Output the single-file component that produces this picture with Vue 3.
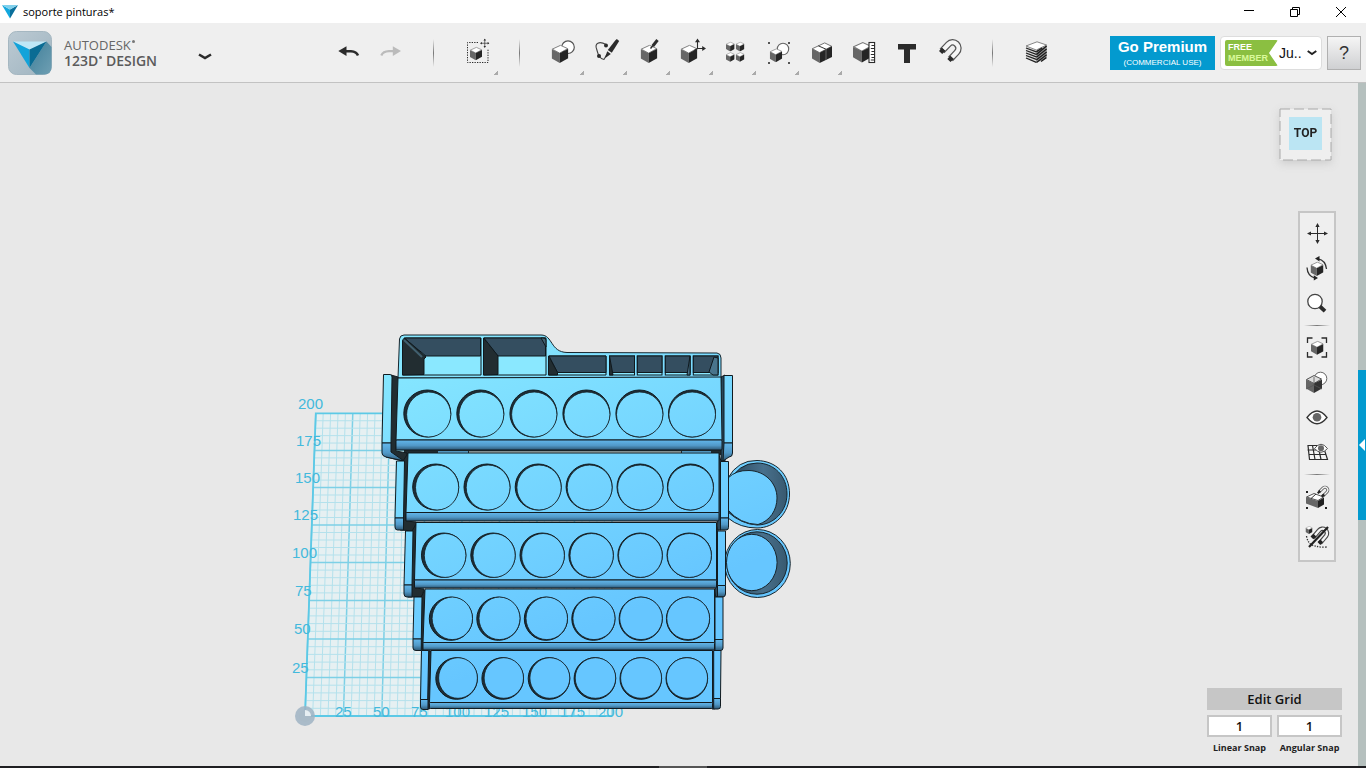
<script setup>
import { ref } from 'vue'

const linear = ref('1')
const angular = ref('1')

const tiers = [
  { cy: 413.5, r: 23.5, xs: [427.3, 480.3, 533.4, 586.4, 639.4, 692], up: 2,
    face: '398,378 721,377 722,440 396,440', fx: 396, fw: 326, by: 440, bh: 10,
    gapL: '391,375 398,377 396,451 407,453 407,462 386,457', gapR: '721,377 725,375 725,461 721,461',
    left: 'M383.5 374.5H390Q392 374.5 392 377L391 443H382Z', leftB: 'M382 443H391V452L404 461L386 457Q382 456 382 453Z',
    right: 'M724 375.5H732.5V443H724Z', rightB: 'M724 443H732.5V453Q732.5 457 729 457L723 461Z' },
  { cy: 487, r: 23, xs: [435.7, 487, 538.2, 589.1, 640, 690.4], up: 1,
    face: '408,453 719,453 719,512.5 406,512.5', fx: 406, fw: 313, by: 512.5, bh: 8.5,
    gapL: '403,461 408,453 406,521 416,522 415,531 400,530', gapR: '719,455 721,461 721,530 717,530',
    left: 'M396.5 461H404.5L403.5 518H395Z', leftB: 'M395 518H403.5V530H397.5Q395 530 395 527Z',
    right: 'M720.5 461.5H728.5V518H720.5Z', rightB: 'M720.5 518H728.5V527.5Q728.5 530 726 530H720.5Z' },
  { cy: 555.2, r: 22.2, xs: [443.7, 493, 542.2, 591.1, 640.1, 689.2], up: 0.5,
    face: '416,522.5 716.5,522.5 716.5,580 414.5,580', fx: 414.5, fw: 302, by: 580, bh: 8,
    gapL: '412,531 416,524 415,588 424,589 422,597 408,597', gapR: '716,524 718,531 718,597 715,597',
    left: 'M405.5 531H413L412 585H404Z', leftB: 'M404 585H412V597H407Q404 597 404 594Z',
    right: 'M717.5 531H725.5V585.5H717.5Z', rightB: 'M717.5 585.5H725.5V594Q725.5 597 722.5 597H717.5Z' },
  { cy: 618.7, r: 21.6, xs: [450.9, 498.4, 545.9, 593.4, 640.7, 688], up: -0.7,
    face: '425,589 714.5,589 714.5,642.5 423,642.5', fx: 423, fw: 291.5, by: 642.5, bh: 7.5,
    gapL: '421,597 425,590 423,650 430,651 430,652 418,650', gapR: '714,590 716,597 716,650 714,650',
    left: 'M414 597H422L421.3 639H413Z', leftB: 'M413 639H421.3V650.5H416Q413 650.5 413 648Z',
    right: 'M715 597H723V639.5H715Z', rightB: 'M715 639.5H723V648Q723 650.5 720.5 650.5H715Z' },
  { cy: 678.5, r: 20.8, xs: [456.6, 502.7, 549, 594.9, 640.8, 686.8], up: -1,
    face: '431,650.5 712.5,650.5 712.5,702.5 429.5,702.5', fx: 429.5, fw: 283, by: 702.5, bh: 6,
    gapL: '428,651 431,651 429.5,709 427,709', gapR: '712,651 714.5,651 714.5,709 712,709',
    left: 'M421.5 650.5H428.7L427.7 699.5H420.5Z', leftB: 'M420.5 699.5H428V709.5H423Q420.5 709.5 420.5 707Z',
    right: 'M713.7 650.5H721L720.5 698.5H713.7Z', rightB: 'M713.7 698.5H720.5V706.5Q720.5 709 718 709H713.7Z' }
]
const depth = [2.8, 2.2, 1.7, 1.1, 0.6, 0.4]

const rowY = [716, 677.5, 639, 600.5, 562.5, 525, 487.5, 450.5, 413.3]
const leftAt = y => 305 + (716 - y) * 0.0355
const rightAt = y => 611 + (716 - y) * 0.002
const rows = []
for (let i = 0; i < 8; i++) {
  for (let k = 0; k < 5; k++) {
    const y = rowY[i] + ((rowY[i + 1] - rowY[i]) * k) / 5
    rows.push({ y, x1: leftAt(y), x2: rightAt(y), major: k === 0 })
  }
}
const cols = []
for (let i = 0; i <= 40; i++) {
  cols.push({ x1: 305 + i * 7.68, x2: 315.8 + i * 7.4, major: i % 5 === 0 })
}
const yLabels = [
  ['200', 298, 409], ['175', 296, 446], ['150', 295, 483], ['125', 293, 520],
  ['100', 292, 558], ['75', 295, 596], ['50', 294, 634], ['25', 292, 673]
]
const xLabels = [
  ['25', 335], ['50', 373], ['75', 411], ['100', 445], ['125', 484], ['150', 522], ['175', 560], ['200', 598]
]
const pockets = [[609.5, 634.5, 'l'], [637.3, 662, 'n'], [665.3, 690, 'r'], [693.3, 718, 'w']]
</script>

<template>
  <div class="app">
    <svg class="defs" aria-hidden="true">
      <symbol id="cube" viewBox="0 0 16 18">
        <path d="M0.5 4.5L8.5 0.8L15.5 4L7.6 8.4Z" fill="#fff" stroke="#777" stroke-width=".9" />
        <path d="M0 4.6L7.7 8.4V18L0 13.6Z" fill="#666" />
        <path d="M7.7 8.4L16 4.2V13.4L7.7 18Z" fill="#252525" />
      </symbol>
      <symbol id="cross" viewBox="0 0 20 20">
        <path d="M10 2V18M2 10H18" stroke="#2b2b2b" stroke-width="1.4" />
        <path d="M10 0L12.6 4H7.4ZM10 20L12.6 16H7.4ZM0 10L4 7.4V12.6ZM20 10L16 7.4V12.6Z" fill="#2b2b2b" />
      </symbol>
    </svg>

    <header class="titlebar">
      <svg class="title-mark" viewBox="0 0 16 14"><path d="M0 0L8 4.5V13.5Z" fill="#12a7de" /><path d="M16 0L8 4.5V13.5Z" fill="#0a6f9b" /><path d="M0 0H16L8 4.5Z" fill="#7fd0ec" /></svg>
      <span class="title-text">soporte pinturas*</span>
      <div class="win">
        <button aria-label="Minimize"><svg viewBox="0 0 10 10"><path d="M0 3.5H10" /></svg></button>
        <button aria-label="Restore"><svg viewBox="0 0 10 10"><path d="M.5 2.5H7.5V9.5H.5ZM2.5 2.5V.5H9.5V7.5H7.5" /></svg></button>
        <button aria-label="Close"><svg viewBox="0 0 10 10"><path d="M0 0L10 10M10 0L0 10" /></svg></button>
      </div>
    </header>

    <div class="toolbar">
      <button class="brand" aria-label="Application menu">
        <svg class="logo" viewBox="0 0 44 44">
          <defs>
            <linearGradient id="lg" x1="0" y1="0" x2="1" y2="1"><stop offset="0" stop-color="#bccad3" /><stop offset="1" stop-color="#9fb4c0" /></linearGradient>
            <linearGradient id="ls" x1="0" y1="0" x2="1" y2="1"><stop offset="0" stop-color="#3f7f99" /><stop offset="1" stop-color="#6f9fb3" /></linearGradient>
          </defs>
          <rect x=".5" y=".5" width="43" height="43" rx="8" fill="url(#lg)" stroke="#a5b7c1" />
          <path d="M38.5 10.5L43.5 16V36Q43.5 43.5 36 43.5H28L21.5 37Z" fill="url(#ls)" />
          <path d="M5 10.5H38.5L21.5 19Z" fill="#bfe7f6" />
          <path d="M5 10.5L21.5 18.5V37Z" fill="#12a3da" />
          <path d="M38.5 10.5L21.5 18.5V37Z" fill="#0a6c94" />
        </svg>
        <span class="brand-text"><span class="b1">AUTODESK<i></i></span><span class="b2">123D<i></i> DESIGN</span></span>
        <svg class="chev" viewBox="0 0 14 7"><path d="M1 1.5L7 5L13 1.5" fill="none" stroke="#2b2b2b" stroke-width="2.6" /></svg>
      </button>

      <nav class="tools" aria-label="Tools">
        <button aria-label="Undo"><svg viewBox="0 0 43 58"><path d="M11.3 27L19.5 22.3V32Z" fill="#2b2b2b" /><path d="M18 27.2H24Q29.5 27.4 31 31.5" fill="none" stroke="#2b2b2b" stroke-width="2.5" /></svg></button>
        <button aria-label="Redo"><svg viewBox="0 0 43 58"><path d="M31 27L22.8 22.3V32Z" fill="#bbb" /><path d="M24 27.2H19Q13 27.4 11.3 31.5" fill="none" stroke="#bbb" stroke-width="2.3" /></svg></button>
        <span class="vsep"></span>
        <button class="more" aria-label="Transform"><svg viewBox="0 0 43 58">
          <path d="M22 18.5H11.5V38.5H32V25" fill="none" stroke="#2b2b2b" stroke-dasharray="1.3 1.2" />
          <use href="#cube" x="14" y="22.5" width="12" height="14" /><use href="#cross" x="24" y="14.5" width="9.5" height="9.5" /></svg></button>
        <span class="vsep"></span>
        <button class="more" aria-label="Primitives"><svg viewBox="0 0 43 58">
          <circle cx="26" cy="23.2" r="6.3" fill="#fff" stroke="#555" stroke-width="1.2" /><use href="#cube" x="9.5" y="20.5" width="17" height="18.5" /></svg></button>
        <button class="more" aria-label="Sketch"><svg viewBox="0 0 43 58">
          <path d="M21 20.5C14 16.5 9.5 19.5 11.6 25C12.4 28 13 30 14 32Q16 35 19 35.5L22 30" fill="none" stroke="#444" stroke-width="1.1" />
          <circle cx="21" cy="21.5" r="2" fill="#2b2b2b" /><circle cx="14" cy="32" r="2" fill="#2b2b2b" />
          <path d="M30.2 16.4L31.8 15L34.2 17L26.8 28.8L22.8 26Z" fill="#2b2b2b" /><path d="M22.2 27.2L25.8 29.9L20 34.3Z" fill="#2b2b2b" /></svg></button>
        <button class="more" aria-label="Construct"><svg viewBox="0 0 43 58">
          <use href="#cube" x="12.5" y="20.5" width="17" height="18.5" /><path d="M29.5 16L24.8 22" stroke="#2b2b2b" stroke-width="3" /><path d="M25 21.5L22.5 24.5" stroke="#2b2b2b" stroke-width="1.4" /></svg></button>
        <button class="more" aria-label="Modify"><svg viewBox="0 0 43 58">
          <use href="#cube" x="9.5" y="20.5" width="17" height="18.5" /><path d="M26.5 17V24.5H33M23 26.8L26.5 24.5" fill="none" stroke="#2b2b2b" stroke-width="1.1" />
          <path d="M26.5 14.5L29 18.2H24ZM35 24.5L31.2 22V27Z" fill="#2b2b2b" /></svg></button>
        <button class="more" aria-label="Pattern"><svg viewBox="0 0 43 58">
          <use href="#cube" x="12" y="17.6" width="8.6" height="10" /><use href="#cube" x="21.8" y="17.6" width="8.6" height="10" />
          <use href="#cube" x="12" y="28" width="8.6" height="10" /><use href="#cube" x="21.8" y="28" width="8.6" height="10" /></svg></button>
        <button class="more" aria-label="Grouping"><svg viewBox="0 0 43 58">
          <circle cx="26" cy="25" r="5.7" fill="#fff" stroke="#666" stroke-width="1.1" /><use href="#cube" x="12.8" y="24.2" width="12.4" height="14" />
          <path d="M11 18h2v2h-2ZM31 18h2v2h-2ZM11 38h2v2h-2ZM31 38h2v2h-2Z" fill="#555" /></svg></button>
        <button class="more" aria-label="Combine"><svg viewBox="0 0 43 58">
          <path d="M12.3 24.7L24.7 18.9L31.7 22.3L19.5 28.7Z" fill="#fff" stroke="#666" stroke-width=".9" /><path d="M12 24.8L19.7 28.7V39L12 34.5Z" fill="#666" />
          <path d="M19.7 28.7L32 22.3V33L19.7 39Z" fill="#252525" /><path d="M18.3 21.8L26 25.2" stroke="#333" stroke-width="1" /><path d="M26 25.2V36" stroke="#666" stroke-width="1" /></svg></button>
        <button aria-label="Measure"><svg viewBox="0 0 43 58">
          <use href="#cube" x="10" y="17" width="18.5" height="22" /><rect x="26" y="18.5" width="5.6" height="20" fill="#fff" stroke="#2b2b2b" stroke-width="1.1" />
          <path d="M28.5 21.5H32M27.8 24.5H32M28.5 27.5H32M27.8 30.5H32M28.5 33.5H32M27.8 36H32" stroke="#2b2b2b" stroke-width="1" /></svg></button>
        <button aria-label="Text"><svg viewBox="0 0 43 58"><path d="M12 20H30V25.5H24V39H18V25.5H12Z" fill="#2b2b2b" /></svg></button>
        <button aria-label="Snap"><svg viewBox="0 0 43 58">
          <path d="M13 27L19.4 20.2A5.7 5.7 0 0 1 27.8 28.2L21.5 35" fill="none" stroke="#555" stroke-width="6.6" />
          <path d="M14.5 25.4L19.4 20.2A5.7 5.7 0 0 1 27.8 28.2L23 33.4" fill="none" stroke="#f5f5f5" stroke-width="4.2" />
          <path d="M10 27L13 23.7L16.4 26.8L13.2 30ZM18.3 35L21.3 31.8L24.7 35L21.5 38Z" fill="#2b2b2b" /></svg></button>
        <span class="vsep"></span>
        <button aria-label="Material"><svg viewBox="0 0 43 58">
          <path d="M11 22.5L21.3 26.5V38.7L11 34Z" fill="#ddd" /><path d="M21.3 26.5L31.8 21.5V34L21.3 38.7Z" fill="#999" />
          <path d="M11 22L22 17.8L31.6 21L21.3 26Z" fill="#fff" stroke="#777" stroke-width=".9" />
          <path d="M11 24L21.3 27.8M11 26.5L21.3 30.3M11 29L21.3 32.8M11 31.5L21.3 35.3M11 34L21.3 38.3" stroke="#222" stroke-width="1.3" />
          <path d="M21.3 30.6L31.6 22M21.3 33.2L31.6 25M21.3 36L31.6 28M21.5 38.5L31.6 30.8M26 37.5L31.3 33.6M21.3 27.8L27 24" stroke="#1c1c1c" stroke-width="1.4" /></svg></button>
      </nav>

      <div class="account">
        <button class="premium"><b>Go Premium</b><small>(COMMERCIAL USE)</small></button>
        <button class="member">
          <span class="badge"><span>FREE</span><span class="m2">MEMBER</span></span>
          <span class="user">Ju..</span>
          <svg class="uchev" viewBox="0 0 10 6"><path d="M.7 1L5 4L9.3 1" fill="none" stroke="#222" stroke-width="1.9" /></svg>
        </button>
        <button class="help">?</button>
      </div>
    </div>

    <main class="body">
      <section class="stage">
        <svg class="scene" viewBox="0 83 1358 683" preserveAspectRatio="xMidYMid meet">
          <defs>
            <linearGradient id="face" gradientUnits="userSpaceOnUse" x1="440" y1="345" x2="560" y2="640"><stop offset="0" stop-color="#86e7ff" /><stop offset="1" stop-color="#66c6ff" /></linearGradient>
            <linearGradient id="bevel" x1="0" y1="0" x2="0" y2="1"><stop offset="0" stop-color="#62b8ec" /><stop offset=".55" stop-color="#5199c8" /><stop offset="1" stop-color="#2d5875" /></linearGradient>
            <linearGradient id="cup" x1="0" y1="0" x2="1" y2="0"><stop offset="0" stop-color="#29465a" /><stop offset=".6" stop-color="#48708c" /><stop offset="1" stop-color="#38596f" /></linearGradient>
          </defs>

          <polygon points="315.8,413.3 611.6,413.3 612,716 305,716" fill="#e6f0f2" />
          <g fill="none">
            <line v-for="(c, i) in cols" :key="'c' + i" :x1="c.x1" y1="716" :x2="c.x2" y2="413.3" :stroke="c.major ? '#7dd0e6' : '#b4e1ec'" :stroke-width="c.major ? 1.5 : 1" />
            <line v-for="(r, i) in rows" :key="'r' + i" :x1="r.x1" :y1="r.y" :x2="r.x2" :y2="r.y" :stroke="r.major ? '#7dd0e6' : '#b4e1ec'" :stroke-width="r.major ? 1.5 : 1" />
            <path d="M611.6 413.3H315.8L305 716H612" stroke="#5cc9e6" stroke-width="1.8" />
          </g>
          <circle cx="305" cy="716" r="10" fill="#9fb3c3" opacity=".85" /><circle cx="305" cy="716" r="6" fill="#a9bac7" />
          <path d="M305 710A6 6 0 0 1 311 716H305Z" fill="#e6eef2" />
          <g class="axis">
            <text v-for="l in yLabels" :key="'y' + l[0]" :x="l[1]" :y="l[2]">{{ l[0] }}</text>
            <text v-for="l in xLabels" :key="'x' + l[0]" :x="l[1]" y="717">{{ l[0] }}</text>
          </g>

          <g stroke="#17252d" stroke-width="1">
            <path d="M728 478Q738 460 757 460.5C776 461 789.5 474 789.5 494C789.5 513 775 528 757 528Q740 528 728 518Z" fill="url(#face)" />
            <path d="M728 484Q738 463 757 463C774 463 787 476 787 494C787 511 774 525 757 525Q741 524 728 512Z" fill="url(#cup)" />
            <path d="M728 478Q736 470 749 470.5C765 471 777 483 777 498C777 510 770 521 758 524.5Q740 524 728 510Z" fill="url(#face)" />
            <ellipse cx="757.5" cy="563.5" rx="32.8" ry="34" fill="url(#face)" />
            <ellipse cx="757" cy="563" rx="30.2" ry="31.2" fill="url(#cup)" />
            <ellipse cx="751.8" cy="562.5" rx="25.3" ry="28.2" fill="url(#face)" />
          </g>

          <path d="M398 378L399.5 339Q400 335 404 335H541C553 335 550 352 567 352.5L717 353Q721 353.5 721 358V378Z" fill="url(#face)" stroke="#17252d" />
          <g stroke="#0f181d" stroke-width="1">
            <path d="M402.5 375V341Q402.5 338 406 338H481V375Z" fill="#8ae8ff" />
            <path d="M404 338H480.5V356H426Z" fill="#344e60" />
            <path d="M402.5 341L405 338.5L426 357L424 359V374.5L402.5 375Z" fill="#222d31" />
            <path d="M404 340L422 357" stroke="#41606f" stroke-width="2" />
            <path d="M483.5 338H546V375H483.5Z" fill="#8ae8ff" />
            <path d="M484 338H545.5V356H498Z" fill="#344e60" />
            <path d="M483.5 338L498 356V374.5L483.5 375Z" fill="#222d31" />
            <path d="M541 338L546 347V340Q546 338 543 338Z" fill="#41606f" />
            <path d="M548.5 356H606V375H548.5Z" fill="#8ae8ff" />
            <path d="M549 356H606V372.5H557.5Z" fill="#344e60" />
            <path d="M548.5 356L557.5 372.5V375H548.5Z" fill="#222d31" />
            <g v-for="p in pockets" :key="p[0]">
              <rect :x="p[0]" y="356" :width="p[1] - p[0]" height="19" fill="#8ae8ff" />
              <rect :x="p[0]" y="356" :width="p[1] - p[0]" height="16.5" fill="#344e60" />
              <path v-if="p[2] === 'l'" :d="`M${p[0]} 356L${p[0] + 3.5} 375H${p[0]}Z`" fill="#222d31" />
              <path v-if="p[2] === 'r'" :d="`M${p[1]} 356L${p[1] - 3} 375H${p[1]}Z`" fill="#49748c" />
              <path v-if="p[2] === 'w'" :d="`M${p[1]} 358L${p[1] - 4} 357L${p[1] - 9} 372L${p[1] - 5} 375H${p[1]}Z`" fill="#49748c" />
            </g>
          </g>

          <path d="M404 450H724V455H404Z" fill="#1f2a2e" />
          <g v-for="t in tiers" :key="t.cy" stroke="#111b20" stroke-width="1">
            <polygon :points="t.gapL" fill="#222d31" />
            <polygon :points="t.gapR" fill="#29485c" />
            <path :d="t.left" fill="url(#face)" /><path :d="t.leftB" fill="url(#bevel)" />
            <path :d="t.right" fill="url(#face)" /><path :d="t.rightB" fill="url(#bevel)" />
            <polygon :points="t.face" fill="url(#face)" />
            <rect :x="t.fx" :y="t.by" :width="t.fw" :height="t.bh" rx="1" fill="url(#bevel)" />
            <template v-for="(x, i) in t.xs" :key="x">
              <circle :cx="x" :cy="t.cy" :r="t.r" fill="#1e2e37" />
              <ellipse :cx="x + depth[i] / 2" :cy="t.cy + t.up / 2" :rx="t.r - depth[i] / 2" :ry="t.r - Math.abs(t.up) / 2" fill="url(#face)" stroke-width=".8" />
            </template>
          </g>
          <path d="M469 451.2H681V452.6H469Z" fill="#a3b1b1" /><path d="M438 451.2H468V452.6H438ZM682 451.2H711V452.6H682Z" fill="#62b8ec" />
        </svg>

        <button class="viewcube">
          <svg viewBox="0 0 53 53"><rect x="1" y="1" width="51" height="51" fill="#efefef" stroke="#aaa" stroke-dasharray="10 4" /></svg>
          <span>TOP</span>
        </button>

        <nav class="navbar" aria-label="View">
          <button aria-label="Pan"><svg viewBox="0 0 34 35"><path d="M17.5 9V26M9 17.5H26" stroke="#2b2b2b" stroke-width="1" /><path d="M17.5 7L19.6 11H15.4ZM17.5 28L19.6 24H15.4ZM7 17.5L11 15.4V19.6ZM28 17.5L24 15.4V19.6Z" fill="#2b2b2b" /></svg></button>
          <button aria-label="Orbit"><svg viewBox="0 0 34 35"><use href="#cube" x="10.5" y="10.5" width="13" height="14.5" />
            <path d="M18 7.8Q25.5 9 26.5 18M7 16.5Q7.5 25 15 27.2" fill="none" stroke="#333" stroke-width="1.3" /><path d="M15 7.5L19.5 5V10.5ZM18 27L13.8 24.2V29.5Z" fill="#222" /></svg></button>
          <button aria-label="Zoom"><svg viewBox="0 0 34 35"><circle cx="15" cy="15.5" r="7.2" fill="#fff" stroke="#444" stroke-width="1.3" /><path d="M20 20.5L25 25.2" stroke="#2b2b2b" stroke-width="3.8" /></svg></button>
          <span class="hsep"></span>
          <button aria-label="Fit"><svg viewBox="0 0 34 35"><use href="#cube" x="11" y="10.5" width="12.5" height="14.5" /><path d="M7.5 13V8H12.5M21.5 8H26.5V13M26.5 22V27H21.5M12.5 27H7.5V22" fill="none" stroke="#2b2b2b" stroke-width="1.3" /></svg></button>
          <button aria-label="Display"><svg viewBox="0 0 34 35"><circle cx="20.5" cy="13.5" r="6.3" fill="#fff" stroke="#666" /><path d="M6.5 14.5L14 10.5L21.5 14L14 18.5Z" fill="#ddd" stroke="#555" /><path d="M6 14.5L14 18.5V28L6 23.5Z" fill="#666" /><path d="M14 18.5L22 14.5V23.5L14 28Z" fill="#333" /><path d="M14 12V20L6 24M14 20L22 24" fill="none" stroke="#555" stroke-width=".8" /></svg></button>
          <button aria-label="Visibility"><svg viewBox="0 0 34 35"><path d="M7 17.5Q17 4.5 27 17.5Q17 30 7 17.5Z" fill="#fff" stroke="#333" stroke-width="1.3" /><circle cx="17" cy="17.3" r="4.3" fill="#666" /></svg></button>
          <button aria-label="Grid visibility"><svg viewBox="0 0 34 35"><path d="M8 10.5H23L27.5 24.5H9.5ZM7.5 15H24.5M8.5 19.5H26M12.5 10.5L15 24.5M18 10.5L21 24.5" fill="#f4f4f4" stroke="#2b2b2b" stroke-width="1.2" /><path d="M14.5 13.5Q21 5 27.5 13.5Q21 21 14.5 13.5Z" fill="#fff" stroke="#555" /><circle cx="21" cy="13.2" r="3" fill="#666" /></svg></button>
          <span class="hsep"></span>
          <button aria-label="Snap faces"><svg viewBox="0 0 34 35"><path d="M6.5 18L14 14.5L23.5 18L18 21.5Z" fill="#fff" stroke="#555" /><path d="M6 18L18 22V29L6 24.5Z" fill="#666" /><path d="M18 22L24 18.5V25.5L18 29Z" fill="#222" /><path d="M16 15L11 19.5" stroke="#333" />
            <path d="M19 13L23 9A2.8 2.8 0 0 1 27 13L23 17" fill="none" stroke="#555" stroke-width="3" /><path d="M20 12L23 9A2.8 2.8 0 0 1 27 13L24 16" fill="none" stroke="#f5f5f5" stroke-width="1.3" /><path d="M17 13.5L19.5 11L21 12.8L18.5 15ZM21 16.5L23.5 14.5L25 16.2L22.5 18.5Z" fill="#222" /><path d="M6 12h2v2h-2ZM6 28h2v2h-2ZM25 28h2v2h-2Z" fill="#222" /></svg></button>
          <button class="last" aria-label="Toggle snapping"><svg viewBox="0 0 34 35"><use href="#cube" x="5.5" y="7" width="7" height="8" /><path d="M6.5 17Q8 26 15 27Q20 28.5 27 28" fill="none" stroke="#333" stroke-width="1.3" stroke-dasharray="1.4 1.3" />
            <path d="M13 18.5L19 11.5A4 4 0 0 1 26 17L20 24" fill="none" stroke="#444" stroke-width="4.6" /><path d="M14.5 16.8L19 11.5A4 4 0 0 1 26 17L21.5 22.4" fill="none" stroke="#f5f5f5" stroke-width="2.4" /><path d="M10.5 17.5L13.5 14.8L16.3 17.5L13.3 20.3ZM17.5 23L20.5 20.5L23 23L20.3 26Z" fill="#222" /><path d="M9 28L28 8" stroke="#222" stroke-width="2.2" /></svg></button>
        </nav>

        <form class="snap" @submit.prevent>
          <button type="button" class="edit">Edit Grid</button>
          <div class="field"><input id="linear" v-model="linear" type="text"><label for="linear">Linear Snap</label></div>
          <div class="field"><input id="angular" v-model="angular" type="text"><label for="angular">Angular Snap</label></div>
        </form>
      </section>
      <aside class="strip">
        <button aria-label="Open parts panel"><svg viewBox="0 0 6 12"><path d="M6 0V12L0 6Z" fill="#fff" /></svg></button>
      </aside>
    </main>
    <footer class="edge"><span></span></footer>
  </div>
</template>

<style>
html, body { margin: 0; overflow: hidden; }
</style>

<style scoped>
.app { height: 100vh; display: flex; flex-direction: column; background: #e8e8e8; font-family: "Liberation Sans", Arial, sans-serif; color: #222; }
button { border: 0; padding: 0; margin: 0; background: none; font: inherit; color: inherit; }
svg { display: block; }
.defs { position: absolute; width: 0; height: 0; }
.titlebar { height: 23px; background: #fff; display: flex; align-items: center; padding: 0 2px; flex: none; }
.title-mark { width: 16px; height: 14px; }
.title-text { margin-left: 5px; font: 11px/16px "Open Sans", "Noto Sans", sans-serif; color: #000; }
.win { margin-left: auto; display: flex; }
.win button { width: 46px; height: 20px; display: grid; place-items: center; }
.win svg { width: 10px; height: 10px; fill: none; stroke: #000; stroke-width: 1; }
.toolbar { height: 59px; flex: none; background: #efefef; border-bottom: 1px solid #c2c2c2; display: flex; align-items: stretch; }
.brand { width: 327px; flex: none; padding-left: 8px; display: flex; align-items: center; text-align: left; }
.logo { width: 44px; height: 44px; flex: none; }
.brand-text { margin-left: 12px; width: 134px; display: flex; flex-direction: column; font-family: "Open Sans", "Noto Sans", sans-serif; color: #666; font-size: 13px; line-height: 15px; white-space: nowrap; }
.b1 { font-weight: 400; }
.b2 { font-weight: 600; color: #5b5b5b; font-size: 14px; }
.brand-text i { display: inline-block; width: 3px; height: 3px; margin-left: 1px; border-radius: 50%; background: #777; vertical-align: 7px; }
.chev { width: 14px; height: 7px; margin-top: 8px; }
.tools { display: flex; flex: none; }
.tools button { position: relative; width: 43px; }
.tools button svg { width: 43px; height: 58px; }
.more::after { content: ""; position: absolute; right: 1px; bottom: 7px; width: 4px; height: 4px; background: linear-gradient(135deg, transparent 48%, #aaa 50%); }
.vsep { width: 43px; display: flex; align-items: center; justify-content: center; box-sizing: border-box; padding-right: 2px; }
.vsep::before { content: ""; width: 1px; height: 28px; background: linear-gradient(transparent, #777, transparent); }
.account { margin-left: auto; padding: 13px 5px 0 0; display: flex; gap: 5px; align-items: flex-start; }
.premium { width: 105px; height: 34px; background: #039acf; color: #fff; display: flex; flex-direction: column; align-items: center; }
.premium b { font-size: 15px; line-height: 22px; }
.premium small { font-size: 8px; line-height: 10px; }
.member { width: 102px; height: 34px; box-sizing: border-box; background: #fff; border: 1px solid #ddd; border-radius: 4px; display: flex; align-items: center; padding-left: 4px; }
.badge { width: 53px; height: 26px; flex: none; background: #8bbf41; border-radius: 2px; clip-path: polygon(0 0, 100% 0, 83% 50%, 100% 100%, 0 100%); display: flex; flex-direction: column; align-items: flex-start; box-sizing: border-box; padding: 2px 0 0 3px; font-weight: 700; font-size: 9px; line-height: 11px; color: #fff; }
.m2 { color: #d9f99a; }
.user { font-size: 14px; margin-left: 1px; width: 28px; text-align: left; color: #111; }
.uchev { width: 10px; height: 6px; }
.help { width: 34px; height: 34px; border: 1px solid #b0b0b0; background: linear-gradient(#f5f5f5, #cfd0d2); font-size: 18px; color: #333; }
.body { flex: 1; min-height: 0; display: flex; }
.stage { position: relative; flex: 1; min-width: 0; }
.scene { width: 100%; height: 100%; }
.axis { font: 15px "Liberation Sans", Arial, sans-serif; fill: #43b9dc; }
.viewcube { position: absolute; right: 26px; top: 25px; width: 53px; height: 53px; filter: drop-shadow(0 3px 4px #ccc); }
.viewcube svg { width: 100%; height: 100%; }
.viewcube span { position: absolute; inset: 10px; top: 9px; bottom: 11px; background: #bbe5f3; font: 700 12px/33px Roboto, "Open Sans", sans-serif; color: #222; }
.navbar { position: absolute; right: 22px; top: 128px; border: 2px solid #c6c6c6; background: #efefef; padding: 3px 0 6px; width: 34px; display: flex; flex-direction: column; }
.navbar button { height: 35px; }
.navbar button svg { width: 34px; height: 35px; }
.navbar .last { margin-top: 5px; }
.hsep { height: 9px; display: grid; place-items: center; }
.hsep::before { content: ""; width: 26px; height: 1px; background: linear-gradient(90deg, transparent, #777, transparent); }
.snap { position: absolute; right: 16px; bottom: 12px; width: 135px; display: grid; grid-template-columns: 1fr 1fr; gap: 5px; font-family: "Open Sans", "Noto Sans", sans-serif; }
.edit { grid-column: 1 / 3; height: 22px; background: #c6c6c6; font-size: 13px; font-weight: 600; color: #111; }
.field { display: flex; flex-direction: column; align-items: center; }
.field input { width: 100%; height: 22px; box-sizing: border-box; border: 2px solid #c6c6c6; border-radius: 0; background: #fff; padding: 0; text-align: center; font: 600 13px "Open Sans", sans-serif; color: #111; }
.field label { margin-top: 4px; font-size: 9px; line-height: 13px; font-weight: 700; white-space: nowrap; color: #222; }
.strip { width: 8px; flex: none; background: #b5c0be; }
.strip button { margin-top: 287px; width: 8px; height: 150px; background: #039acf; display: grid; place-items: center; }
.strip svg { width: 6px; height: 12px; }
.edge { height: 2px; flex: none; background: #1f1f22; }
.edge span { display: block; margin: 0 auto; width: 48px; height: 2px; background: #555; }
</style>
